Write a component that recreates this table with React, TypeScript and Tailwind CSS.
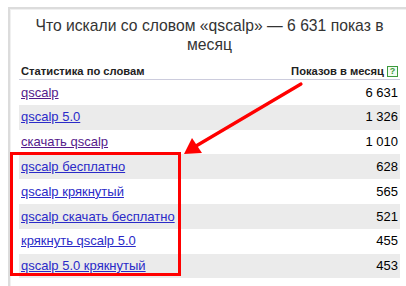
import React from "react";

type Row = { phrase: string; count: string; visited?: boolean };

const rows: Row[] = [
  { phrase: "qscalp", count: "6 631", visited: true },
  { phrase: "qscalp 5.0", count: "1 326" },
  { phrase: "скачать qscalp", count: "1 010", visited: true },
  { phrase: "qscalp бесплатно", count: "628" },
  { phrase: "qscalp крякнутый", count: "565" },
  { phrase: "qscalp скачать бесплатно", count: "521" },
  { phrase: "крякнуть qscalp 5.0", count: "455" },
  { phrase: "qscalp 5.0 крякнутый", count: "453" },
  { phrase: "qscalp скачать", count: "448" },
];

// small green "?" help badge next to the column header
const HelpBadge = () => (
  <span className="ml-[3px] inline-flex h-[11px] w-[11px] items-center justify-center border border-[#3c9a3c] bg-[#f2fbf2] text-[9px] font-bold leading-none text-[#3c9a3c]">
    ?
  </span>
);

const App = () => {
  return (
    <div
      className="relative h-[286px] w-[406px] overflow-hidden bg-white"
      style={{ fontFamily: '"Liberation Sans", Arial, sans-serif' }}
    >
      <div className="ml-[8px] mt-[7px] w-[420px] border-l-2 border-t-2 border-[#dcdcdc]">
        <div className="border-l border-t border-[#f0f0f0] pl-[8px] pb-4">
          <h2 className="w-[381px] pt-[6px] text-center text-[15.7px] leading-[19px] text-[#333]">
            Что искали со словом «qscalp» — 6 631 показ в месяц
          </h2>
          <div className="mt-[9px] w-[381px]">
            <div className="flex h-[17px] items-center justify-between border-b border-[#ccd] px-[2px] text-[11.2px] font-bold text-[#222]">
              <span>Статистика по словам</span>
              <span className="flex items-center">
                Показов в месяц
                <HelpBadge />
              </span>
            </div>
            {rows.map(({ phrase, count, visited }, i) => (
              <div
                key={i}
                className={`flex h-[24.8px] items-center justify-between px-[2px] text-[13px] ${
                  i % 2 === 1 ? "bg-[#ebebeb]" : "bg-white"
                }`}
              >
                <a
                  href="#"
                  className={`underline ${
                    visited ? "text-[#551a8b]" : "text-[#2a2ac8]"
                  }`}
                >
                  {phrase}
                </a>
                <span className="text-black">{count}</span>
              </div>
            ))}
          </div>
        </div>
      </div>

      {/* red highlight box */}
      <div className="absolute left-[10px] top-[152px] h-[124px] w-[171px] border-[3px] border-[#ff0000]" />

      {/* red arrow pointing at the box */}
      <svg
        className="absolute left-0 top-0"
        width="406"
        height="286"
        viewBox="0 0 406 286"
      >
        <line
          x1="301"
          y1="84"
          x2="196"
          y2="146"
          stroke="#ff0000"
          strokeWidth="3.2"
          strokeLinecap="round"
        />
        <polygon points="184,154 192,138 202,153" fill="#ff0000" />
      </svg>
    </div>
  );
};

export default App;
